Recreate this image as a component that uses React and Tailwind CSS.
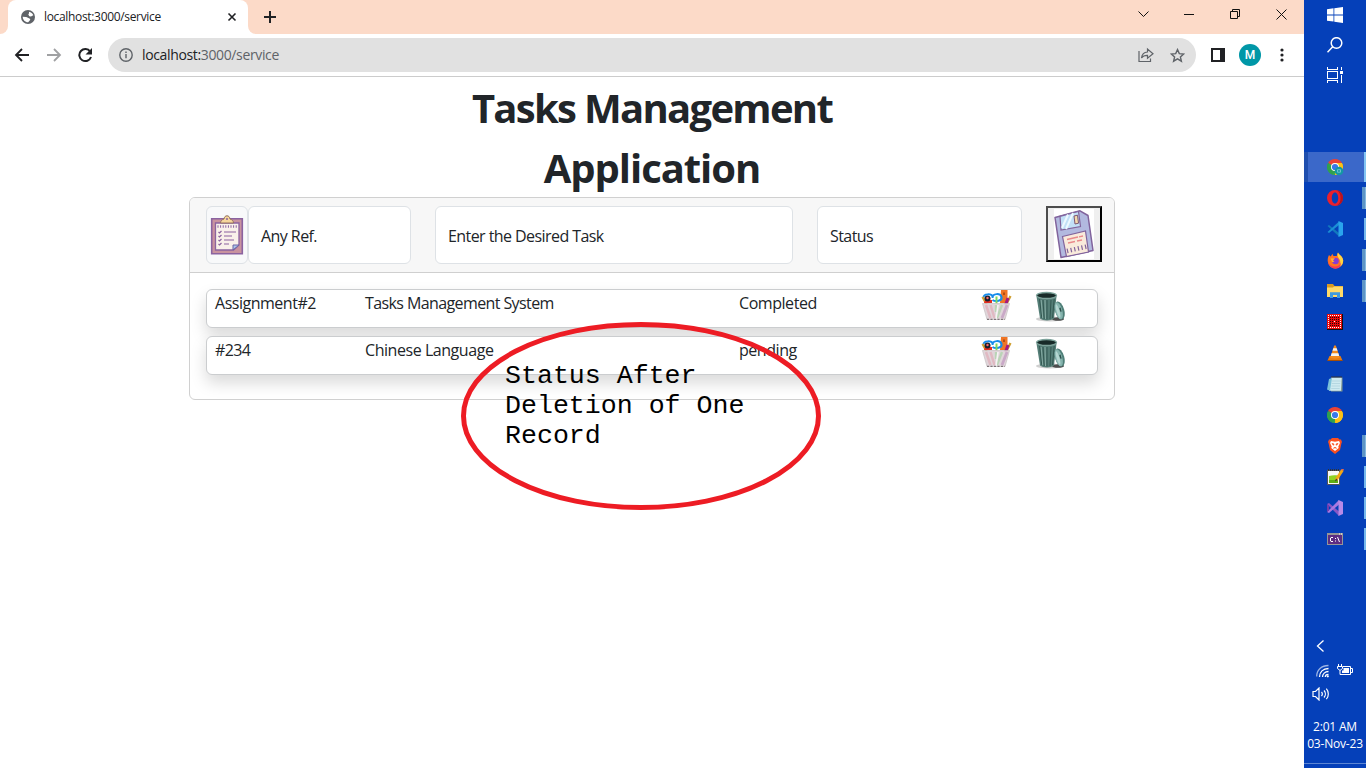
import React from "react";

const UI = "font-['Open_Sans','Noto_Sans',sans-serif]";

function GlobeIcon() {
  return (
    <svg width="14" height="14" viewBox="0 0 14 14">
      <circle cx="7" cy="7" r="7" fill="#5f6368" />
      <path d="M8 1.700c2 .3 3.700 1.700 4.300 3.600L10 6.600 8.300 6.200 7.300 4.500 8 3.200zM1.700 6.800 5 7c1.600.2 2 1.200 3.300 1.400 1 .2 1.200 1 .6 1.800L7.200 12.300C4.200 12.400 1.800 10 1.700 6.800z" fill="#fff" />
    </svg>
  );
}

function ChromeLogo({ badge }) {
  return (
    <svg width="18" height="18" viewBox="0 0 18 18">
      <path d="M9 9 2.100 5A8 8 0 0 1 15.900 5z" fill="#ea4335" />
      <path d="M9 9 15.900 5A8 8 0 0 1 9 17z" fill="#fbbc04" />
      <path d="M9 9 9 17A8 8 0 0 1 2.100 5z" fill="#34a853" />
      <path d="M9 5h6.900a8 8 0 0 1-6.900 12l3.500-6z" fill="#fbc116" />
      <path d="M2.100 5 5.500 11 9 13l-2.300 3.700A8 8 0 0 1 2.100 5z" fill="#30a04e" />
      <circle cx="9" cy="9" r="4" fill="#fff" />
      <circle cx="9" cy="9" r="3.100" fill="#3879e8" />
      {badge && <circle cx="13" cy="13" r="4.300" fill="#1498a4" />}
      {badge && <path d="M11.500 11.700h3v2.500h-3z" fill="none" stroke="#8fd3da" strokeWidth=".7" />}
    </svg>
  );
}

const icons = {
  chromeActive: <ChromeLogo badge />,
  chrome: <ChromeLogo />,
  opera: (
    <svg width="16" height="16" viewBox="0 0 16 16">
      <path fillRule="evenodd" d="M8 0a8 8 0 1 1 0 16A8 8 0 0 1 8 0zm0 2.500C6 2.500 4.800 5 4.800 8S6 13.500 8 13.500 11.200 11 11.200 8 10 2.500 8 2.500z" fill="#e8202e" />
      <path d="M10 .6c4 1 6 4 6 7.400s-2 6.500-6 7.400c2.500-1.500 3.500-4 3.500-7.400S12.500 2 10 .6z" fill="#b5141f" />
    </svg>
  ),
  vscode: (
    <svg width="16" height="16" viewBox="0 0 16 16">
      <path d="M.5 5 2 4l10 8v3.500z" fill="#1279bd" />
      <path d="M.5 11 2 12 12 4V.5z" fill="#1b8ed5" />
      <path d="M11.500 0 16 2v12l-4.500 2z" fill="#2aa4ed" />
    </svg>
  ),
  firefox: (
    <svg width="17" height="17" viewBox="0 0 17 17">
      <path d="M2 3l1.500 1.600C4.500 3.500 5 2.500 5.300 1.800L6.500 4h3.200L11 .5c.5 2 4.800 3.500 5.200 8A7.700 7.700 0 0 1 .7 9C.6 6.500 1.400 4 2 3z" fill="#ff7321" />
      <path d="M11 .5c.5 2 4.800 3.500 5.200 8 0 3.500-2.500 6.500-5.500 7.200 3-3 3.500-6.500 1-9.500C10.500 4.500 10 2.500 11 .5z" fill="#ffd642" />
      <path d="M1 7.500C1 12 3 14 7 14.500s6-1.500 6.500-4c1 4-1.500 6-5 6.200C4.500 16.700.5 13.500 1 7.500z" fill="#f33a5b" />
      <circle cx="8.500" cy="9" r="3.300" fill="#873bd4" />
      <path d="M3.500 6.500 8 6.300 6 8.500l1.500 1.500L5 10z" fill="#ffb12e" />
    </svg>
  ),
  folder: (
    <svg width="16" height="14" viewBox="0 0 16 14">
      <path d="M0 0h6l1.500 2H16v11H0z" fill="#d89a22" />
      <path d="M0 3.500h6L7 2.500h9V13H0z" fill="#ffda69" />
      <path d="M3 14V8.200h10V14h-3v-3H6v3z" fill="#3d9be0" />
    </svg>
  ),
  grid: (
    <svg width="16" height="16" viewBox="0 0 16 16" shapeRendering="crispEdges">
      <path d="M0 0h16v16H0z" fill="#111" />
      <path d="M0 0h15v15H0z" fill="#e80b0b" />
      <path d="M1 1.500h13M1 13.500h13M1.500 3v10M13.500 3v10" fill="none" stroke="#fff" strokeDasharray="1 1" />
      <path d="M3 3.500h9M3 5.500h9M3 7.500h9M3 9.500h9M3 11.500h9" stroke="#2a0505" strokeDasharray="1 1" />
      <path d="M6 6h3v3H6z" fill="#e80b0b" />
      <path d="M7 7h1v1H7z" fill="#fff" />
    </svg>
  ),
  vlc: (
    <svg width="16" height="16" viewBox="0 0 16 16">
      <path d="M2.500 11h11l2 4.500H.5z" fill="#e77c12" />
      <path d="M7.200.5h1.600l4 12c-2 1.500-7.600 1.500-9.600 0z" fill="#f58a1c" />
      <path d="M6.300 3.200h3.400l.8 2.500h-5zM4.600 8.300h6.800l.8 2.600H3.800z" fill="#f4f4f4" />
      <path d="M.5 15h15v1H.5z" fill="#a74e05" />
    </svg>
  ),
  notepad: (
    <svg width="16" height="16" viewBox="0 0 16 16">
      <path d="M4 1.500h11.500v14H4z" fill="#81978f" />
      <path d="M4.200 1.500h10.500L14 14.800H2z" fill="#cfeaf0" />
      <path d="M2 3 0 13.500l3 1.200L5 2z" fill="#7bc1d8" />
      <path d="M5 5h8.500M4.700 7.500h8.500M4.500 10h8.500M4.200 12.500h8.500" stroke="#a9cfda" strokeWidth=".7" />
      <path d="M4.500 1h10.500" stroke="#333" strokeWidth="2" strokeDasharray="1 1" />
    </svg>
  ),
  brave: (
    <svg width="14" height="16" viewBox="0 0 14 16">
      <path d="M4 0h6l1.500 1.500 1.500 0 1 2.500-.5 1L12 12l-5 4-5-4L.5 5 0 4l1-2.500h1.500z" fill="#fb5020" />
      <path d="M3 3l4 .7L11 3l1 2-1.700 3.500.4 1.500L7 13l-3.700-3 .4-1.500L2 5z" fill="#fff" />
      <path d="M4 5.500l2 .6-.5 1.200zM10 5.500l-2 .6.500 1.200zM5.300 10.300l1.700-1 1.700 1" stroke="#fb5020" strokeWidth=".8" fill="#fb5020" />
    </svg>
  ),
  npp: (
    <svg width="17" height="16" viewBox="0 0 17 16">
      <path d="M.5 1.500h12v14H.5z" fill="#f7f7f7" stroke="#555" />
      <path d="M2 7c3-1 6-1 9-.5V14H2z" fill="#8fd323" />
      <path d="M2 11h9v3H2z" fill="#5fae12" />
      <path d="M1 1h11" stroke="#333" strokeWidth="2" strokeDasharray="1 1" />
      <path d="M15.500 1 9 11" stroke="#f3a714" strokeWidth="3" />
      <path d="M16.500 1 14.800 0" stroke="#e45f51" strokeWidth="2" />
      <path d="M9 9.500 8 12.500l2.500-1.500" fill="#333" />
    </svg>
  ),
  vs: (
    <svg width="16" height="16" viewBox="0 0 16 16">
      <path d="M0 4l2-1 10 8.500V16z" fill="#8856c5" />
      <path d="M0 12l2 1L12 4.500V0z" fill="#a878e0" />
      <path d="M0 4l2 1.500v5L0 12z" fill="#6e3dae" />
      <path d="M11.500 0 16 2v12l-4.500 2z" fill="#b78ae8" />
    </svg>
  ),
  cmd: (
    <svg width="16" height="12" viewBox="0 0 16 12">
      <path d="M0 0h16v12H0z" fill="#969696" />
      <path d="M1 2h14v9H1z" fill="#5c2d83" />
      <path d="M6 4.500H4L3.500 5v3l.5.500h2M10.500 4l2 5" fill="none" stroke="#fff" />
      <path d="M8 5h1v1H8zM8 7.500h1v1H8zM12 .5h1v1h-1zM14 .5h1v1h-1z" fill="#fff" />
    </svg>
  ),
};

const apps = [
  ["chromeActive", "active"],
  ["opera", "double"],
  ["vscode", "single"],
  ["firefox", "double"],
  ["folder", "double"],
  ["grid", ""],
  ["vlc", ""],
  ["notepad", ""],
  ["chrome", ""],
  ["brave", "double"],
  ["npp", "single"],
  ["vs", "single"],
  ["cmd", "single"],
];

function AppButton({ name, mode }) {
  return (
    <div className="flex h-[31px] w-full items-start">
      <div className={mode === "active" ? "flex h-[30px] w-full items-center border-l-4 border-[#1f4fae] bg-[#3b68c9]" : "flex h-[30px] w-full items-center pl-1"}>
        <span className="w-[18px]" />
        <span className="flex w-[18px] shrink-0 justify-center">{icons[name]}</span>
        <span className="flex-1" />
        {mode === "double" && <span className="h-[22px] w-[3px] bg-[#5d94c6]" />}
        {mode === "double" && <span className="h-[22px] w-px bg-[#84b8e0]" />}
        {mode === "single" && <span className="h-[22px] w-[2px] bg-[#76b9ed]" />}
        {mode === "active" && <span className="h-[30px] w-[2px] bg-[#83c4f3]" />}
      </div>
    </div>
  );
}

function Taskbar() {
  return (
    <aside className={`flex h-full w-[62px] shrink-0 flex-col items-center bg-[#0540b9] text-white ${UI}`}>
      <div className="flex h-[30px] items-center">
        <svg width="16" height="16" viewBox="0 0 16 16" fill="#fff">
          <path d="M0 2.200 6.500 1.300v6.200H0zM7.300 1.200 16 0v7.500H7.300zM0 8.400h6.500v6.200L0 13.700zM7.300 8.400H16V16l-8.700-1.200z" />
        </svg>
      </div>
      <div className="flex h-[30px] items-center">
        <svg width="16" height="16" viewBox="0 0 16 16" fill="none" stroke="#fff" strokeWidth="1.500">
          <circle cx="9.500" cy="6" r="5.300" />
          <path d="M5.700 9.800.5 15.300" />
        </svg>
      </div>
      <div className="flex h-[30px] items-center">
        <svg width="16" height="16" viewBox="0 0 16 16" fill="none" stroke="#fff" shapeRendering="crispEdges">
          <path d="M.5 4.500h10v7H.5zM.5 0v2.500h10V0M.5 16v-2.500h10V16M14.500 0v3M14.500 8v8" />
          <path d="M13 4h3v3h-3z" fill="#fff" stroke="none" />
        </svg>
      </div>
      <div className="mt-[62px] w-full">
        {apps.map(([name, mode]) => (
          <AppButton key={name} name={name} mode={mode} />
        ))}
      </div>
      <div className="mt-auto flex h-[129px] w-full flex-col">
        <svg className="ml-[12px]" width="9" height="14" viewBox="0 0 9 14" fill="none" stroke="#fff" strokeWidth="1.300">
          <path d="M7.500 1.500 1.500 7l6 5.500" />
        </svg>
        <div className="mt-[11px] ml-[12px] flex gap-[8px]">
          <svg width="13" height="14" viewBox="0 0 13 14" fill="none" stroke="#fff" strokeWidth="1.300">
            <path d="M.7 12.500C.7 6 5.500 1.500 12.500 1.500" opacity=".6" />
            <path d="M3.500 13C3.500 8 7 4.500 12.500 4.500M6.500 13c0-3 2.500-5.500 6-5.500" />
            <path d="M9.300 13c0-1.500 1.200-2.700 3.200-2.700" />
            <circle cx="11.800" cy="12.300" r="1.100" fill="#fff" stroke="none" />
          </svg>
          <svg width="16" height="14" viewBox="0 0 16 14" fill="none" stroke="#fff">
            <path d="M1.500 0v2M4.500 0v2M.5 2.500h5v2L3.500 6h-1L.5 4.500zM3 6v4.500h2" />
            <path d="M6 2.500h7.500v8H5M14 4.500h1.500v4H14" />
            <path d="M6.500 4H12v5H5V6.500h1.500z" fill="#fff" stroke="none" />
          </svg>
        </div>
        <svg className="mt-[9px] ml-[8px]" width="18" height="14" viewBox="0 0 18 14" fill="none" stroke="#fff" strokeWidth="1.200">
          <path d="M1 4.500h2.500L7 1v12L3.500 9.500H1zM9.500 5c1 1.200 1 2.800 0 4M12 3.500c1.800 2 1.800 5 0 7M14.300 1.700c2.700 3 2.700 7.500 0 10.500" />
        </svg>
        <div className="mt-[17px] text-center text-[12px] leading-[17px] tracking-[-0.2px] whitespace-nowrap">
          <div>2:01 AM</div>
          <div>03-Nov-23</div>
        </div>
        <div className="mt-[11px] h-px w-full bg-[#5d86d4]" />
      </div>
    </aside>
  );
}

function Browser() {
  return (
    <header className={`w-full text-[#202124] ${UI}`}>
      <div className="flex h-[34px] bg-[#fcdac8]">
        <div className="flex w-[8px] bg-white"><div className="w-full rounded-br-[8px] bg-[#fcdac8]" /></div>
        <div className="flex w-[240px] bg-[#fcdac8]">
          <div className="flex w-full items-center rounded-t-[8px] bg-white pl-[13px]">
            <GlobeIcon />
            <span className="ml-[9px] w-[183px] shrink-0 text-[12px] leading-4 tracking-[-0.33px]">localhost:3000/service</span>
            <svg className="shrink-0" width="10" height="10" viewBox="0 0 10 10" stroke="#202124" strokeWidth="1.600"><path d="M1.500 1.500l7 7M8.500 1.500l-7 7" /></svg>
          </div>
        </div>
        <div className="flex w-[8px] bg-white"><div className="w-full rounded-bl-[8px] bg-[#fcdac8]" /></div>
        <svg className="mt-[11px] ml-[8px]" width="12" height="12" viewBox="0 0 12 12" stroke="#202124" strokeWidth="2"><path d="M6 0v12M0 6h12" /></svg>
        <div className="ml-auto flex h-[28px] items-center">
          <svg className="mr-[35px]" width="11" height="7" viewBox="0 0 11 7" fill="none" stroke="#111"><path d="M.5.500l5 5 5-5" /></svg>
          <svg className="mr-[36px]" width="10" height="3" viewBox="0 0 10 3" fill="#111"><path d="M0 1h10v1H0z" /></svg>
          <svg className="mr-[35px]" width="11" height="11" viewBox="0 0 11 11" fill="none" stroke="#111"><path d="M.5 2.500h7v7h-7zM2.500 2.500v-2h7v7h-2" /></svg>
          <svg className="mr-[17px]" width="11" height="11" viewBox="0 0 11 11" stroke="#111"><path d="M.5.500l10 10M10.500.500l-10 10" /></svg>
        </div>
      </div>
      <div className="flex h-[43px] items-center border-b border-[#cccccc] bg-white">
        <svg className="ml-[14px]" width="15" height="14" viewBox="0 0 15 14" fill="none" stroke="#202124" strokeWidth="1.800"><path d="M15 7H2M8 1 2 7l6 6" /></svg>
        <svg className="ml-[18px]" width="15" height="14" viewBox="0 0 15 14" fill="none" stroke="#a0a1a3" strokeWidth="1.800"><path d="M0 7h13M7 1l6 6-6 6" /></svg>
        <svg className="ml-[16px]" width="15" height="15" viewBox="0 0 15 15" fill="none" stroke="#202124" strokeWidth="2"><path d="M12.200 3.600A6 6 0 1 0 13 9" /><path d="M14 0v6.500H7.500z" fill="#202124" stroke="none" /></svg>
        <div className="ml-[15px] flex h-[34px] w-[1088px] items-center rounded-full bg-[#e1e1e1] pr-[11px] pl-[11px]">
          <svg width="14" height="14" viewBox="0 0 14 14" fill="none" stroke="#5f6368" strokeWidth="1.400"><circle cx="7" cy="7" r="6.200" /><path d="M7 6v4.200M7 3.500V5" /></svg>
          <span className="ml-[9px] text-[14px] leading-5 tracking-[-0.36px]">localhost:<span className="text-[#5f6368]">3000/service</span></span>
          <svg className="ml-auto" width="16" height="16" viewBox="0 0 16 16" fill="none" stroke="#5f6368" strokeWidth="1.200"><path d="M1 4v10.500h11.500V11.500" /><path d="M3.500 11C4 7 6 5.200 9.500 5V2l5.500 4.700-5.500 4.600v-3C7 8.200 5 8.800 3.500 11z" /></svg>
          <svg className="ml-[16px]" width="15" height="15" viewBox="0 0 15 15" fill="none" stroke="#5f6368" strokeWidth="1.400"><path d="M7.500 1.600l1.800 4 4.400.4-3.300 2.900 1 4.300-3.900-2.300-3.900 2.300 1-4.300L1.300 6l4.400-.4z" /></svg>
        </div>
        <svg className="ml-[15px]" width="14" height="14" viewBox="0 0 14 14"><path d="M0 0h14v14H0z" fill="#202124" /><path d="M2 2h7v10H2z" fill="#fff" /></svg>
        <div className="ml-[14px] flex h-[22px] w-[22px] items-center justify-center rounded-full bg-[#0097a7] font-[Roboto,sans-serif] text-[12px] font-medium text-white">M</div>
        <svg className="ml-[19px]" width="4" height="14" viewBox="0 0 4 14" fill="#202124"><circle cx="2" cy="2" r="1.600" /><circle cx="2" cy="7" r="1.600" /><circle cx="2" cy="12" r="1.600" /></svg>
      </div>
    </header>
  );
}

function ClipboardIcon() {
  return (
    <svg width="34" height="40" viewBox="0 0 34 40">
      <path d="M1.700 3.700h30.600v35H1.700z" fill="#c9939f" stroke="#8b63a0" strokeWidth="1.600" />
      <path d="M5.500 8h23.500v22l-5.500 5H5.500z" fill="#f9f1ea" stroke="#8b63a0" strokeWidth="1.300" />
      <path d="M23 35v-5h6z" fill="#a9c6ea" stroke="#6d63a5" />
      <path d="M10.500 8c0-2 1.500-3.500 3.500-4C14.300 2 15.300.800 17 .8s2.700 1.200 3 3.200c2 .5 3.500 2 3.500 4z" fill="#f6d69b" stroke="#94705c" />
      <circle cx="17" cy="4" r="1" fill="#8b63a0" />
      <path d="M7.500 11.500h20" stroke="#8b63a0" strokeWidth="2.600" strokeDasharray="1 1.600" />
      <path d="M14 17h12M14 21h8M14 25h10M14 29h5" stroke="#8b63a0" strokeWidth="1.200" />
      <path d="M8.500 17l1 1 2-2M8.500 21l1 1 2-2M8.500 25l1 1 2-2M8.500 29l1 1 2-2" fill="none" stroke="#8b63a0" strokeWidth="1.200" />
    </svg>
  );
}

function FloppyIcon() {
  return (
    <svg width="40" height="50" viewBox="0 0 40 50">
      <path d="M0 0h40v50H0z" fill="#fff" />
      <path d="M1 8.500 26 1.800 34 6.500 39 41.500 7 48.500z" fill="#b2b9df" stroke="#81639c" strokeWidth="1.500" strokeLinejoin="round" />
      <path d="M6 7.300 24.500 2.500 26.500 17.500 7 21z" fill="#c2e0f7" stroke="#81639c" strokeWidth="1.200" />
      <path d="M14 5.500 8 19M19 4 12 20" stroke="#edf8ff" strokeWidth="2" />
      <path d="M20 7l3.500-.8 1 8-3.500.8z" fill="#f4d9ac" stroke="#7b5572" />
      <path d="M8.500 27.500 31.500 22 34.500 43 12.500 47.500z" fill="#f9eadb" stroke="#81639c" strokeWidth="1.200" />
      <path d="M13 30.500l11-2.500M25 27.800l4-.8M14 34l7-1.500M23 32l5-1" stroke="#e9898b" strokeWidth="1.300" />
      <path d="M13 42 33 37.500" stroke="#81639c" strokeWidth="4.500" strokeDasharray="1.200 2.500" />
    </svg>
  );
}

function EditIcon() {
  return (
    <svg width="31" height="31" viewBox="0 0 31 31">
      <path d="M20 0h6.500v13H19z" fill="#ef7525" />
      <path d="M22 2.500h2v2.500h-2z" fill="#b64d11" />
      <path d="M2.500 7.500c0-4 8-4 9-1M11.500 8c0-5 8-5 9-1s-6 5-9 3" fill="none" stroke="#168ceb" strokeWidth="2" />
      <path d="M1.500 7l4 7M29.500 6l-4 8" stroke="#d0a032" strokeWidth="2.300" />
      <path d="M3 13h8v-3H4z" fill="#e42d23" />
      <circle cx="6.500" cy="8.500" r="3" fill="#16202d" />
      <circle cx="6.500" cy="8" r="1.200" fill="#f66" />
      <path d="M15.500 6.500v7" stroke="#7ed95f" strokeWidth="2" />
      <path d="M27 8l-2.500 7" stroke="#a51982" strokeWidth="3" />
      <path d="M1.500 13.500h27l-4.500 16H6z" fill="#ded3d8" fillOpacity=".95" />
      <path d="M5 15l4.500 13M9.500 15l4 13" stroke="#e0b9c2" strokeWidth="2.500" />
      <path d="M26 15l-5 13" stroke="#c9a9c7" strokeWidth="2.800" />
      <path d="M15 15v7M21 15l-5 13" stroke="#bad4b6" strokeWidth="2.300" />
      <path d="M17 15l-2 14" stroke="#f6f3f4" strokeWidth="1.600" />
      <path d="M1.500 13.500h27l-4.500 16H6z" fill="none" stroke="#c6c0c2" strokeWidth=".7" />
      <path d="M6 29.300h18" stroke="#6b6063" strokeDasharray="2 1.500" />
    </svg>
  );
}

function TrashIcon() {
  return (
    <svg width="31" height="31" viewBox="0 0 31 31">
      <ellipse cx="15" cy="28" rx="14" ry="2.500" fill="#777" opacity=".35" />
      <ellipse cx="23" cy="28" rx="6" ry="1.800" fill="#222" opacity=".75" />
      <path d="M1.500 5.500h20l-2.500 22c-3 2.500-11 2.500-14 0z" fill="#547d76" />
      <path d="M4.500 8l2.300 19M8 9l1.200 19M12 9v19.500M16 9l-1 19M19.200 8 17.500 27" stroke="#335852" strokeWidth="1" />
      <path d="M6.200 9l1.500 18M10 9l.5 19" stroke="#8bb0a8" strokeWidth=".9" />
      <ellipse cx="11.500" cy="4.500" rx="10" ry="3" fill="#182b29" stroke="#7da39b" strokeWidth="1.300" />
      <g transform="rotate(-16 24.500 19)">
        <ellipse cx="24.500" cy="19.500" rx="4.600" ry="9.300" fill="#4f7f78" />
        <ellipse cx="23.600" cy="19.500" rx="3.500" ry="8.800" fill="#86b4ae" />
        <ellipse cx="22.800" cy="19.500" rx="1.500" ry="7" fill="#b5d6d1" />
        <path d="M25.500 17v4" stroke="#2d4f4a" strokeWidth="1.400" />
      </g>
    </svg>
  );
}

const tasks = [
  { ref: "Assignment#2", task: "Tasks Management System", status: "Completed", refCls: "tracking-[-0.48px]", taskCls: "tracking-[-0.6px]", stCls: "tracking-[-0.45px]" },
  { ref: "#234", task: "Chinese Language", status: "pending", refCls: "tracking-[-0.65px]", taskCls: "tracking-[-0.45px]", stCls: "tracking-[-0.45px]" },
];

function Field({ className, children }) {
  return (
    <div className={`flex h-[58px] items-center rounded-[6px] border border-[#dee2e6] bg-white pt-[2px] pl-[12px] text-[16px] leading-6 tracking-[-0.57px] ${className}`}>
      {children}
    </div>
  );
}

export default function App() {
  return (
    <div className="flex h-[768px] w-[1366px] overflow-hidden bg-white">
      <div className="relative flex w-[1304px] flex-col">
        <Browser />
        <main className={`flex flex-col items-center text-[#212529] ${UI}`}>
          <h1 className="pt-px pb-px text-center text-[40px] leading-[60px] font-bold">
            <div className="tracking-[-1.7px]">Tasks Management</div>
            <div className="tracking-[-1.05px]">Application</div>
          </h1>
          <section className="-mt-[2px] flex h-[203px] w-[926px] flex-col rounded-[6px] border border-[#d0d0d0] bg-white">
            <div className="flex h-[75px] items-start rounded-t-[5px] border-b border-[#cfcfcf] bg-[#f7f7f7] pt-[8px] pl-[16px]">
              <div className="flex h-[58px] w-[42px] items-center justify-center rounded-[6px] border border-[#dee2e6] bg-[#f8f9fa]"><ClipboardIcon /></div>
              <Field className="w-[163px]">Any Ref.</Field>
              <Field className="ml-[24px] w-[358px]">Enter the Desired Task</Field>
              <Field className="ml-[24px] w-[205px]">Status</Field>
              <button className="ml-[24px] flex h-[56px] w-[56px] items-center justify-center border-2 border-t-[#4d4d4d] border-r-black border-b-black border-l-[#4d4d4d] bg-[#efefef]"><FloppyIcon /></button>
            </div>
            <div className="flex flex-col gap-[8px] px-[16px] pt-[16px]">
              {tasks.map((t) => (
                <div key={t.ref} className="flex h-[39px] w-[892px] rounded-[6px] border border-[#cbcdcf] bg-white pl-[8px] text-[16px] leading-[27px] shadow-[0_8px_16px_rgba(0,0,0,0.15)]">
                  <span className={`w-[150px] ${t.refCls}`}>{t.ref}</span>
                  <span className={`w-[374px] ${t.taskCls}`}>{t.task}</span>
                  <span className={`w-[242px] ${t.stCls}`}>{t.status}</span>
                  <EditIcon />
                  <span className="mt-px ml-[23px]"><TrashIcon /></span>
                </div>
              ))}
            </div>
          </section>
        </main>
        <svg className="absolute top-[322px] left-[461px]" width="360" height="188" viewBox="0 0 360 188" fill="none">
          <ellipse cx="180" cy="94" rx="177.500" ry="91.500" stroke="#ed1c24" strokeWidth="5" />
        </svg>
        <div className="absolute top-[361px] left-[505px] w-[260px] font-['Liberation_Mono',monospace] text-[26.600px] leading-[30px] text-black">
          Status After Deletion of One Record
        </div>
      </div>
      <Taskbar />
    </div>
  );
}
